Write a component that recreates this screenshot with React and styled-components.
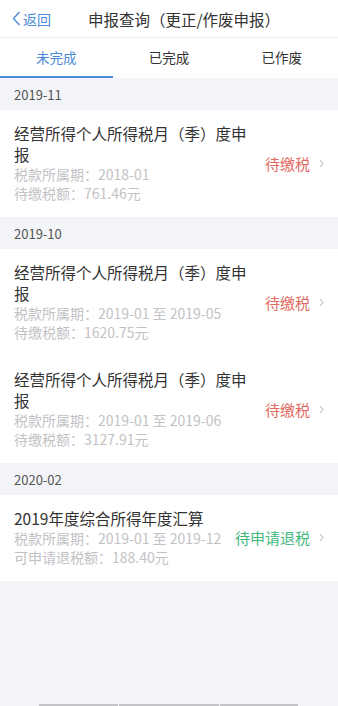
import React from "react";
import styled, { createGlobalStyle } from "styled-components";

const GlobalStyle = createGlobalStyle`
  html, body {
    margin: 0;
    padding: 0;
    background: #f4f5f9;
  }
  body {
    font-family: "Noto Sans CJK SC", "Noto Sans", sans-serif;
  }
`;

const Page = styled.div`
  width: 338px;
  min-height: 706px;
  display: flex;
  flex-direction: column;
  background: #f4f5f9;
`;

const Header = styled.div`
  height: 37px;
  display: flex;
  align-items: center;
  background: #fff;
  border-bottom: 1px solid #eeeef0;
  padding-left: 12px;
`;

const Back = styled.div`
  display: flex;
  align-items: center;
  gap: 2px;
  color: #4a8ad6;
  font-size: 14px;
`;

const Title = styled.div`
  margin-left: 37px;
  color: #333;
  font-size: 15.5px;
`;

const Tabs = styled.div`
  display: grid;
  grid-template-columns: repeat(3, 1fr);
  height: 40px;
  background: #fff;
`;

const Tab = styled.div`
  display: flex;
  align-items: center;
  justify-content: center;
  font-size: 13.5px;
  color: ${(p) => (p.$active ? "#4a8ad6" : "#333")};
  border-bottom: 2px solid ${(p) => (p.$active ? "#4a8ad6" : "transparent")};
  box-sizing: border-box;
`;

const Section = styled.div`
  height: 32px;
  display: flex;
  align-items: center;
  padding-left: 14px;
  font-size: 13px;
  color: #555;
  background: #f3f4f8;
`;

const Card = styled.div`
  display: flex;
  align-items: center;
  background: #fff;
  padding: 13px 14px 14px 14px;
`;

const Info = styled.div`
  flex: 1;
  max-width: 236px;
  min-width: 0;
`;

const Name = styled.div`
  font-size: 15.5px;
  line-height: 21px;
  color: #333;
`;

const Meta = styled.div`
  font-size: 14px;
  line-height: 19px;
  color: #c2c2c5;
  white-space: nowrap;
`;

const Status = styled.div`
  margin-left: auto;
  flex-shrink: 0;
  display: flex;
  align-items: center;
  gap: 9px;
  font-size: 15px;
  color: ${(p) => (p.$tone === "green" ? "#3fb87c" : "#e26a61")};
`;

const Footer = styled.div`
  margin-top: auto;
  display: flex;
  gap: 1px;
  padding: 0 40px 0 39px;
`;

const FooterPiece = styled.div`
  height: 2px;
  flex: ${(p) => p.$grow};
  background: #c4c4c8;
`;

const Chevron = () => (
  <svg width="5" height="9" viewBox="0 0 5 9">
    <polyline points="1,1 4,4.5 1,8" fill="none" stroke="#cfcfd3" strokeWidth="1.2" />
  </svg>
);

const BackIcon = () => (
  <svg width="9" height="15" viewBox="0 0 9 15">
    <polyline points="7.5,1 1.5,7.5 7.5,14" fill="none" stroke="#4a8ad6" strokeWidth="1.4" />
  </svg>
);

const groups = [
  {
    month: "2019-11",
    items: [
      {
        name: "经营所得个人所得税月（季）度申报",
        period: "2018-01",
        amountLabel: "待缴税额",
        amount: "761.46元",
        status: "待缴税",
      },
    ],
  },
  {
    month: "2019-10",
    items: [
      {
        name: "经营所得个人所得税月（季）度申报",
        period: "2019-01 至 2019-05",
        amountLabel: "待缴税额",
        amount: "1620.75元",
        status: "待缴税",
      },
      {
        name: "经营所得个人所得税月（季）度申报",
        period: "2019-01 至 2019-06",
        amountLabel: "待缴税额",
        amount: "3127.91元",
        status: "待缴税",
      },
    ],
  },
  {
    month: "2020-02",
    items: [
      {
        name: "2019年度综合所得年度汇算",
        period: "2019-01 至 2019-12",
        amountLabel: "可申请退税额",
        amount: "188.40元",
        status: "待申请退税",
        tone: "green",
      },
    ],
  },
];

export default function App() {
  return (
    <>
      <GlobalStyle />
      <Page>
        <Header>
          <Back>
            <BackIcon />
            返回
          </Back>
          <Title>申报查询（更正/作废申报）</Title>
        </Header>
        <Tabs>
          <Tab $active>未完成</Tab>
          <Tab>已完成</Tab>
          <Tab>已作废</Tab>
        </Tabs>
        {groups.map((g) => (
          <React.Fragment key={g.month}>
            <Section>{g.month}</Section>
            {g.items.map((it, i) => (
              <Card key={i}>
                <Info>
                  <Name>{it.name}</Name>
                  <Meta>税款所属期：{it.period}</Meta>
                  <Meta>
                    {it.amountLabel}：{it.amount}
                  </Meta>
                </Info>
                <Status $tone={it.tone}>
                  {it.status}
                  <Chevron />
                </Status>
              </Card>
            ))}
          </React.Fragment>
        ))}
        <Footer>
          <FooterPiece $grow={79} />
          <FooterPiece $grow={100} />
          <FooterPiece $grow={78} />
        </Footer>
      </Page>
    </>
  );
}
